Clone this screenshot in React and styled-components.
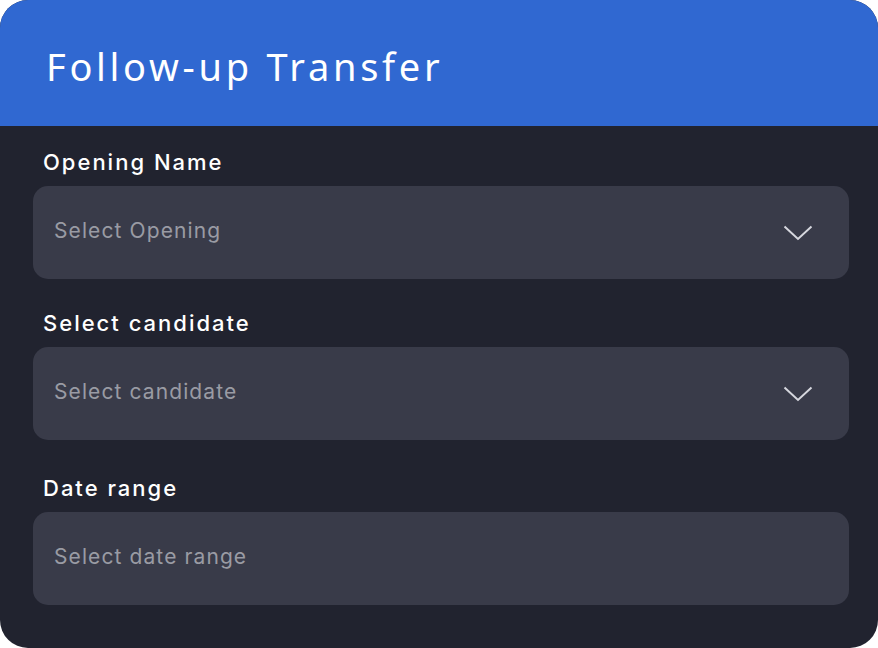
import React from 'react';
import styled, { createGlobalStyle } from 'styled-components';

const GlobalStyle = createGlobalStyle`
  html, body {
    margin: 0;
    padding: 0;
    background: #ffffff;
  }
  * {
    box-sizing: border-box;
  }
`;

const Card = styled.div`
  width: 878px;
  height: 648px;
  border-radius: 28px;
  overflow: hidden;
  background: #21232f;
  display: flex;
  flex-direction: column;
`;

const Header = styled.header`
  height: 126px;
  background: #3068d1;
  display: flex;
  align-items: center;
  padding: 6px 46px 0;
`;

const Title = styled.h1`
  margin: 0;
  color: #ffffff;
  font-family: 'Noto Sans', sans-serif;
  font-weight: 400;
  font-size: 38px;
  letter-spacing: 3.7px;
`;

const Body = styled.div`
  padding: 22px 29px 0 33px;
  display: flex;
  flex-direction: column;
  gap: 30px;
`;

const Field = styled.div`
  display: flex;
  flex-direction: column;
  gap: 10px;
  margin-top: ${(p) => p.$extra || 0}px;
`;

const Label = styled.label`
  padding-left: 10px;
  height: 28px;
  line-height: 28px;
  color: #ffffff;
  font-family: 'Inter', sans-serif;
  font-weight: 500;
  font-size: 22px;
  letter-spacing: 2px;
`;

const Select = styled.div`
  height: 93px;
  border-radius: 15px;
  background: #393b49;
  display: flex;
  align-items: center;
  justify-content: space-between;
  padding: 0 36px 0 21px;
  cursor: pointer;
`;

const Placeholder = styled.span`
  margin-bottom: 5px;
  color: #9a9ba4;
  font-family: 'Inter', sans-serif;
  font-size: 21px;
  letter-spacing: 1.1px;
`;

const Chevron = () => (
  <svg width="30" height="16" viewBox="0 0 30 16" fill="none">
    <path d="M1.5 1.5 L15 14 L28.5 1.5" stroke="#d6d7de" strokeWidth="2" />
  </svg>
);

const fields = [
  { label: 'Opening Name', placeholder: 'Select Opening', dropdown: true, extra: 0 },
  { label: 'Select candidate', placeholder: 'Select candidate', dropdown: true, extra: 0 },
  { label: 'Date range', placeholder: 'Select date range', dropdown: false, extra: 4 },
];

export default function App() {
  return (
    <>
      <GlobalStyle />
      <Card>
        <Header>
          <Title>Follow-up Transfer</Title>
        </Header>
        <Body>
          {fields.map((f) => (
            <Field key={f.label} $extra={f.extra}>
              <Label>{f.label}</Label>
              <Select>
                <Placeholder>{f.placeholder}</Placeholder>
                {f.dropdown && <Chevron />}
              </Select>
            </Field>
          ))}
        </Body>
      </Card>
    </>
  );
}
